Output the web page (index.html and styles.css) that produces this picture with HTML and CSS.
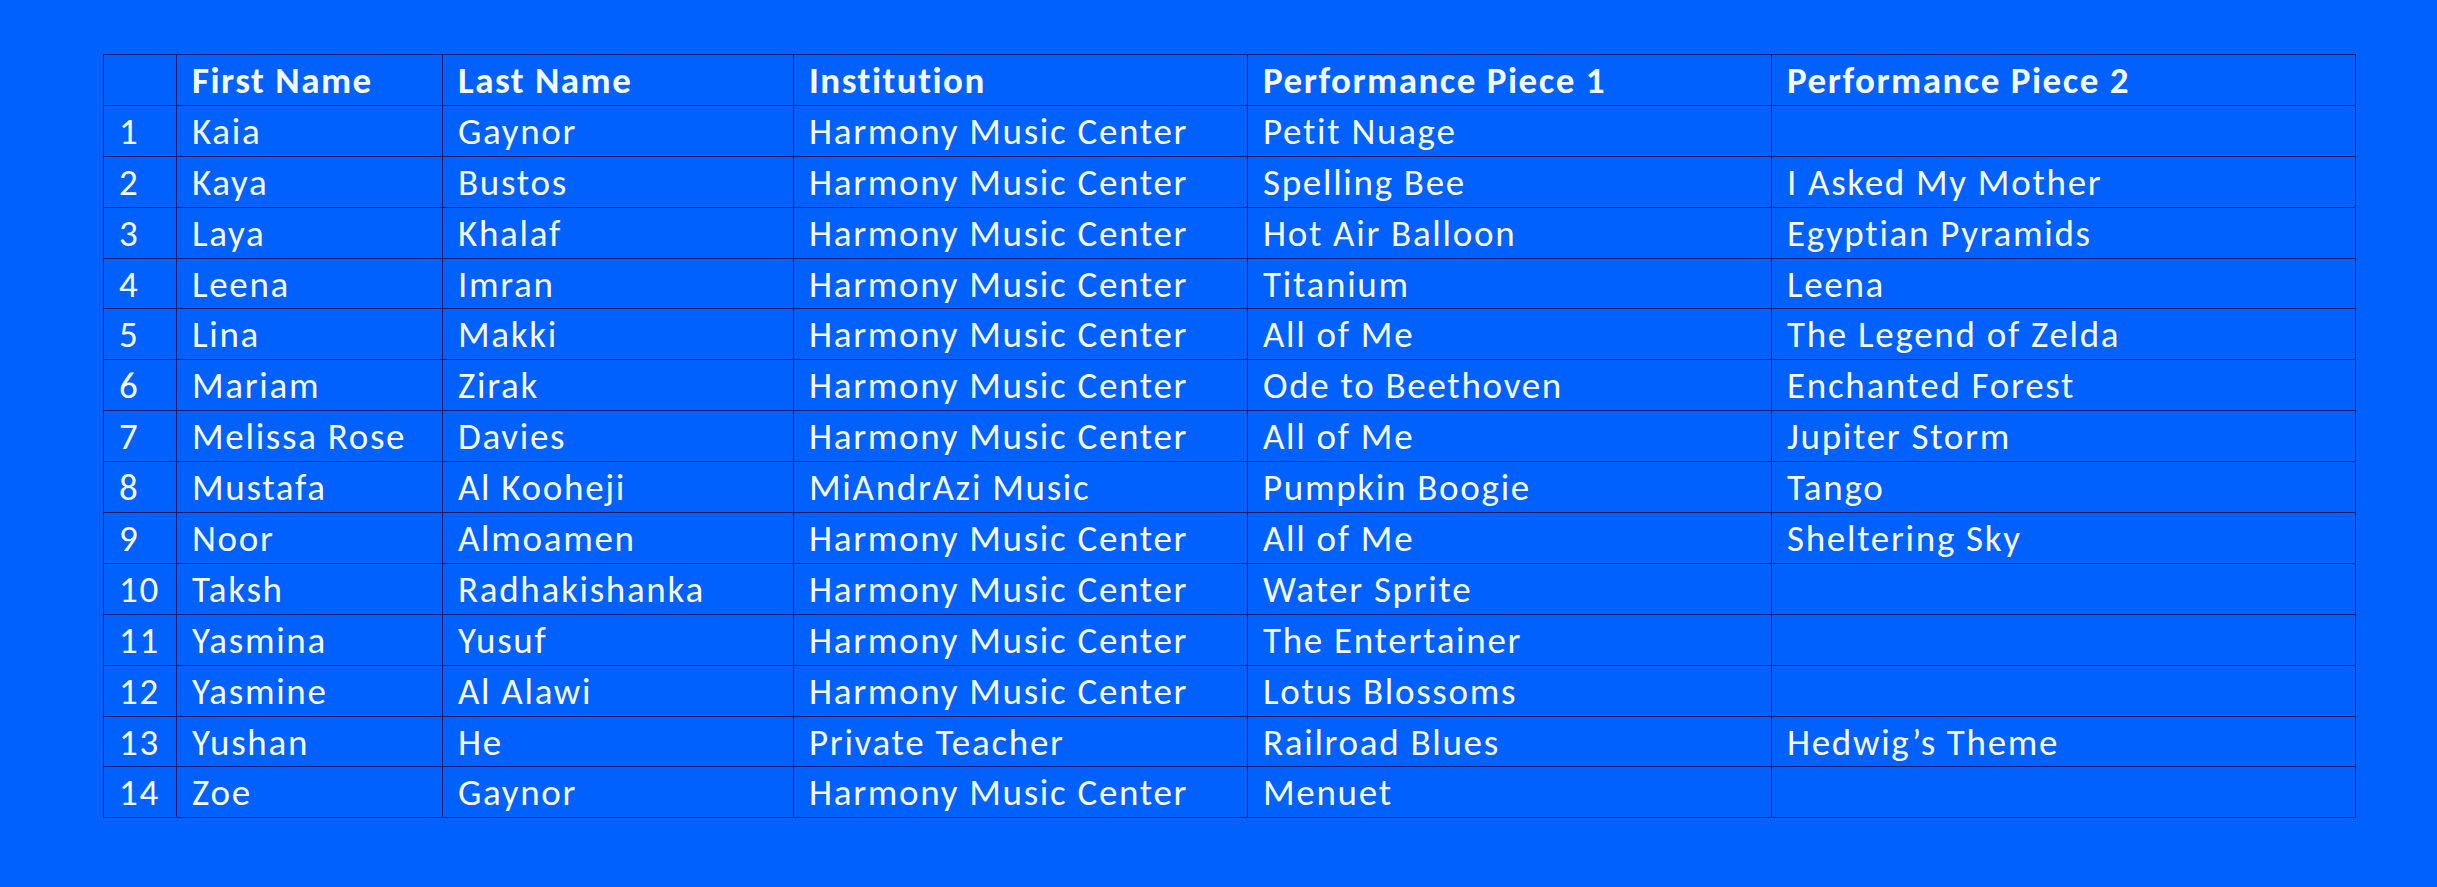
FILE: index.html
```html
<!DOCTYPE html>
<html lang="en">
<head>
<meta charset="utf-8">
<title>Performance Pieces</title>
<link rel="stylesheet" href="styles.css">
</head>
<body>
<main class="page">
<table class="roster">
<colgroup>
<col class="c-num"><col class="c-first"><col class="c-last"><col class="c-inst"><col class="c-p1"><col class="c-p2">
</colgroup>
<thead>
<tr><th></th><th>First Name</th><th>Last Name</th><th>Institution</th><th>Performance Piece 1</th><th>Performance Piece 2</th></tr>
</thead>
<tbody>
<tr><td>1</td><td>Kaia</td><td>Gaynor</td><td>Harmony Music Center</td><td>Petit Nuage</td><td></td></tr>
<tr><td>2</td><td>Kaya</td><td>Bustos</td><td>Harmony Music Center</td><td>Spelling Bee</td><td>I Asked My Mother</td></tr>
<tr><td>3</td><td>Laya</td><td>Khalaf</td><td>Harmony Music Center</td><td>Hot Air Balloon</td><td>Egyptian Pyramids</td></tr>
<tr><td>4</td><td>Leena</td><td>Imran</td><td>Harmony Music Center</td><td>Titanium</td><td>Leena</td></tr>
<tr><td>5</td><td>Lina</td><td>Makki</td><td>Harmony Music Center</td><td>All of Me</td><td>The Legend of Zelda</td></tr>
<tr><td>6</td><td>Mariam</td><td>Zirak</td><td>Harmony Music Center</td><td>Ode to Beethoven</td><td>Enchanted Forest</td></tr>
<tr><td>7</td><td>Melissa Rose</td><td>Davies</td><td>Harmony Music Center</td><td>All of Me</td><td>Jupiter Storm</td></tr>
<tr><td>8</td><td>Mustafa</td><td>Al Kooheji</td><td>MiAndrAzi Music</td><td>Pumpkin Boogie</td><td>Tango</td></tr>
<tr><td>9</td><td>Noor</td><td>Almoamen</td><td>Harmony Music Center</td><td>All of Me</td><td>Sheltering Sky</td></tr>
<tr><td>10</td><td>Taksh</td><td>Radhakishanka</td><td>Harmony Music Center</td><td>Water Sprite</td><td></td></tr>
<tr><td>11</td><td>Yasmina</td><td>Yusuf</td><td>Harmony Music Center</td><td>The Entertainer</td><td></td></tr>
<tr><td>12</td><td>Yasmine</td><td>Al Alawi</td><td>Harmony Music Center</td><td>Lotus Blossoms</td><td></td></tr>
<tr><td>13</td><td>Yushan</td><td>He</td><td>Private Teacher</td><td>Railroad Blues</td><td>Hedwig’s Theme</td></tr>
<tr><td>14</td><td>Zoe</td><td>Gaynor</td><td>Harmony Music Center</td><td>Menuet</td><td></td></tr>
</tbody>
</table>
</main>
</body>
</html>
```
FILE: styles.css
```css
html, body {
  margin: 0;
  padding: 0;
  background: #0061fe;
}
.page {
  padding: 54px 0 0 103px;
  height: 887px;
  box-sizing: border-box;
}
.roster {
  border-collapse: collapse;
  table-layout: fixed;
  width: 2252px;
  font-family: "Carlito", "Calibri", "Lato", sans-serif;
  font-size: 37px;
  letter-spacing: 1.7px;
  color: #f4f9ff;
}
.c-num { width: 73px; }
.c-first { width: 266px; }
.c-last { width: 351px; }
.c-inst { width: 454px; }
.c-p1 { width: 524px; }
.c-p2 { width: 584px; }
.roster tr {
  height: 50.9px;
}
.roster th,
.roster td {
  border: 1px solid #1c1a6a;
  padding: 6px 8px 0 15px;
  text-align: left;
  vertical-align: top;
  white-space: nowrap;
  overflow: hidden;
  line-height: 40px;
  box-sizing: border-box;
}
.roster th {
  font-weight: 700;
  letter-spacing: 1.5px;
}
```
